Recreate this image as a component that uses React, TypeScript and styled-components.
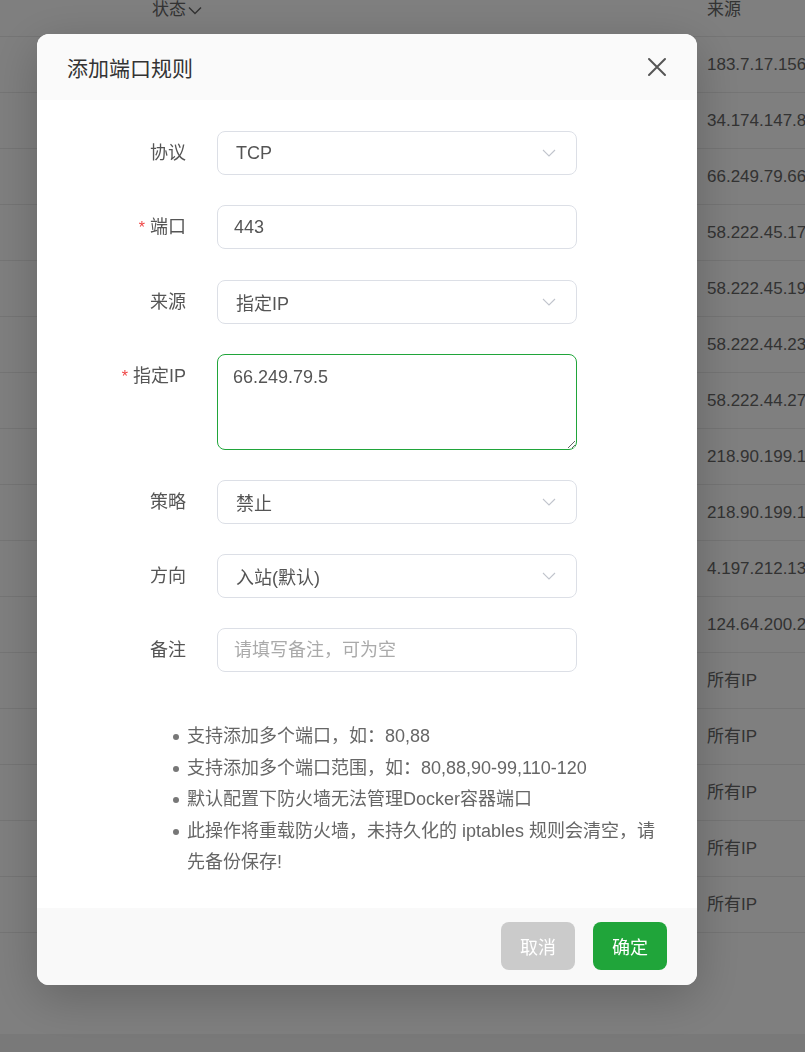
import React, { useEffect, useRef } from "react";
import styled, { createGlobalStyle } from "styled-components";

const FONT = `"Liberation Sans", Arial, "Noto Sans CJK SC", sans-serif`;

const GlobalStyle = createGlobalStyle`
  html, body {
    margin: 0;
    padding: 0;
    height: 100%;
    overflow: hidden;
  }
  body {
    font-family: ${FONT};
    background: #ffffff;
  }
  * {
    box-sizing: border-box;
  }
`;

const sources = [
  "183.7.17.156",
  "34.174.147.82",
  "66.249.79.66",
  "58.222.45.17",
  "58.222.45.19",
  "58.222.44.23",
  "58.222.44.27",
  "218.90.199.12",
  "218.90.199.15",
  "4.197.212.13",
  "124.64.200.21",
  "所有IP",
  "所有IP",
  "所有IP",
  "所有IP",
  "所有IP",
];

interface Field {
  label: string;
  required?: boolean;
  kind: "select" | "input" | "textarea";
  value?: string;
  placeholder?: string;
}

const fields: Field[] = [
  { label: "协议", kind: "select", value: "TCP" },
  { label: "端口", kind: "input", value: "443", required: true },
  { label: "来源", kind: "select", value: "指定IP" },
  { label: "指定IP", kind: "textarea", value: "66.249.79.5", required: true },
  { label: "策略", kind: "select", value: "禁止" },
  { label: "方向", kind: "select", value: "入站(默认)" },
  { label: "备注", kind: "input", placeholder: "请填写备注，可为空" },
];

const notes = [
  "支持添加多个端口，如：80,88",
  "支持添加多个端口范围，如：80,88,90-99,110-120",
  "默认配置下防火墙无法管理Docker容器端口",
  "此操作将重载防火墙，未持久化的 iptables 规则会清空，请先备份保存!",
];

const Chevron = () => (
  <svg width="14" height="8" viewBox="0 0 14 8" fill="none">
    <polyline points="1,1 7,7 13,1" stroke="#c0c4cc" strokeWidth="1.1" />
  </svg>
);

const CloseIcon = () => (
  <svg width="20" height="20" viewBox="0 0 20 20" fill="none">
    <path d="M2 2 L18 18 M18 2 L2 18" stroke="#555" strokeWidth="2" strokeLinecap="round" />
  </svg>
);

const App: React.FC = () => {
  const ipRef = useRef<HTMLTextAreaElement>(null);

  useEffect(() => {
    const el = ipRef.current;
    if (el) {
      el.focus();
      el.setSelectionRange(el.value.length, el.value.length);
    }
  }, []);

  return (
    <>
      <GlobalStyle />
      <Page>
        <TableHead>
          <StatusHead>
            状态
            <svg width="14" height="9" viewBox="0 0 14 9" fill="none">
              <polyline points="1,1.5 7,7.5 13,1.5" stroke="#666" strokeWidth="1.5" />
            </svg>
          </StatusHead>
          <SourceCell>来源</SourceCell>
        </TableHead>
        {sources.map((ip, i) => (
          <TableRow key={i}>
            <SourceCell>{ip}</SourceCell>
          </TableRow>
        ))}
        <PageFooter />
      </Page>

      <Overlay />

      <Dialog>
        <DialogHeader>
          <Title>添加端口规则</Title>
          <CloseButton aria-label="关闭">
            <CloseIcon />
          </CloseButton>
        </DialogHeader>

        <DialogBody>
          {fields.map((f) => (
            <FormRow key={f.label}>
              <Label>
                {f.required && <Star>*</Star>}
                {f.label}
              </Label>
              {f.kind === "select" && (
                <SelectBox>
                  <span>{f.value}</span>
                  <Chevron />
                </SelectBox>
              )}
              {f.kind === "input" && (
                <TextInput defaultValue={f.value} placeholder={f.placeholder} />
              )}
              {f.kind === "textarea" && (
                <TextArea ref={ipRef} defaultValue={f.value} />
              )}
            </FormRow>
          ))}

          <NoteList>
            {notes.map((n) => (
              <Note key={n}>{n}</Note>
            ))}
          </NoteList>
        </DialogBody>

        <DialogFooter>
          <Button $variant="cancel">取消</Button>
          <Button $variant="primary">确定</Button>
        </DialogFooter>
      </Dialog>
    </>
  );
};

const Page = styled.div`
  width: 805px;
  height: 1052px;
  background: #ffffff;
  color: #666;
  font-size: 17px;
  display: flex;
  flex-direction: column;
`;

const TableHead = styled.div`
  height: 37px;
  display: flex;
  align-items: flex-start;
  border-bottom: 1px solid #ebebeb;
  padding-top: 0;
`;

const StatusHead = styled.div`
  margin-left: 152px;
  width: 555px;
  display: flex;
  align-items: center;
  gap: 2px;
  line-height: 20px;
  color: #666;
  font-size: 17px;
`;

const TableRow = styled.div`
  height: 56px;
  display: flex;
  align-items: center;
  padding-left: 707px;
  border-bottom: 1px solid #ebebeb;
  flex-shrink: 0;
`;

const SourceCell = styled.div`
  white-space: nowrap;
  font-size: 17px;
  line-height: 20px;
  color: #666;
`;

const PageFooter = styled.div`
  margin-top: auto;
  height: 18px;
  background: #f3f3f3;
`;

const Overlay = styled.div`
  position: fixed;
  inset: 0;
  background: rgba(0, 0, 0, 0.5);
`;

const Dialog = styled.div`
  position: fixed;
  left: 37px;
  top: 34px;
  width: 660px;
  background: #fff;
  border-radius: 12px;
  overflow: hidden;
  box-shadow: 0 12px 48px rgba(0, 0, 0, 0.22);
  display: flex;
  flex-direction: column;
`;

const DialogHeader = styled.div`
  height: 66px;
  background: #fafafa;
  display: flex;
  align-items: center;
  justify-content: space-between;
  padding: 0 30px;
`;

const Title = styled.h2`
  margin: 0;
  font-size: 21px;
  font-weight: 400;
  color: #333;
`;

const CloseButton = styled.button`
  border: none;
  background: transparent;
  padding: 0;
  width: 20px;
  height: 20px;
  display: flex;
  cursor: pointer;
`;

const DialogBody = styled.div`
  padding: 31px 29px 29px 0;
  display: flex;
  flex-direction: column;
`;

const FormRow = styled.div`
  display: flex;
  align-items: flex-start;
  margin-bottom: 30px;
`;

const Label = styled.label`
  width: 180px;
  padding-right: 31px;
  text-align: right;
  font-size: 18px;
  line-height: 44px;
  color: #555;
  white-space: nowrap;
`;

const Star = styled.span`
  color: #ef4444;
  margin-right: 5px;
  font-size: 16px;
`;

const fieldBase = `
  width: 360px;
  height: 44px;
  border: 1px solid #dcdfe6;
  border-radius: 8px;
  background: #fff;
  font-family: ${FONT};
  font-size: 18px;
  color: #555;
`;

const SelectBox = styled.div`
  ${fieldBase}
  display: flex;
  align-items: center;
  justify-content: space-between;
  padding: 0 20px 0 18px;
`;

const TextInput = styled.input`
  ${fieldBase}
  padding: 0 16px;
  outline: none;

  &::placeholder {
    color: #aaa;
  }
`;

const TextArea = styled.textarea`
  ${fieldBase}
  height: 96px;
  padding: 8px 15px;
  line-height: 28px;
  border-color: #20a53a;
  outline: none;
  resize: vertical;
  caret-color: #333;
`;

const NoteList = styled.ul`
  list-style: none;
  margin: 19px 0 0 150px;
  padding: 0;
  width: 481px;
`;

const Note = styled.li`
  position: relative;
  font-size: 18px;
  line-height: 31.5px;
  color: #666;

  &::before {
    content: "";
    position: absolute;
    left: -14px;
    top: 13px;
    width: 6px;
    height: 6px;
    border-radius: 50%;
    background: #777;
  }
`;

const DialogFooter = styled.div`
  height: 77px;
  background: #f9f9f9;
  display: flex;
  align-items: center;
  justify-content: flex-end;
  gap: 18px;
  padding: 0 30px 1px;
`;

const Button = styled.button<{ $variant: "cancel" | "primary" }>`
  width: 74px;
  height: 48px;
  border: none;
  border-radius: 8px;
  font-family: ${FONT};
  font-size: 18px;
  color: #fff;
  background: ${(p) => (p.$variant === "primary" ? "#20a53a" : "#cbcbcb")};
  cursor: pointer;
`;

export default App;
